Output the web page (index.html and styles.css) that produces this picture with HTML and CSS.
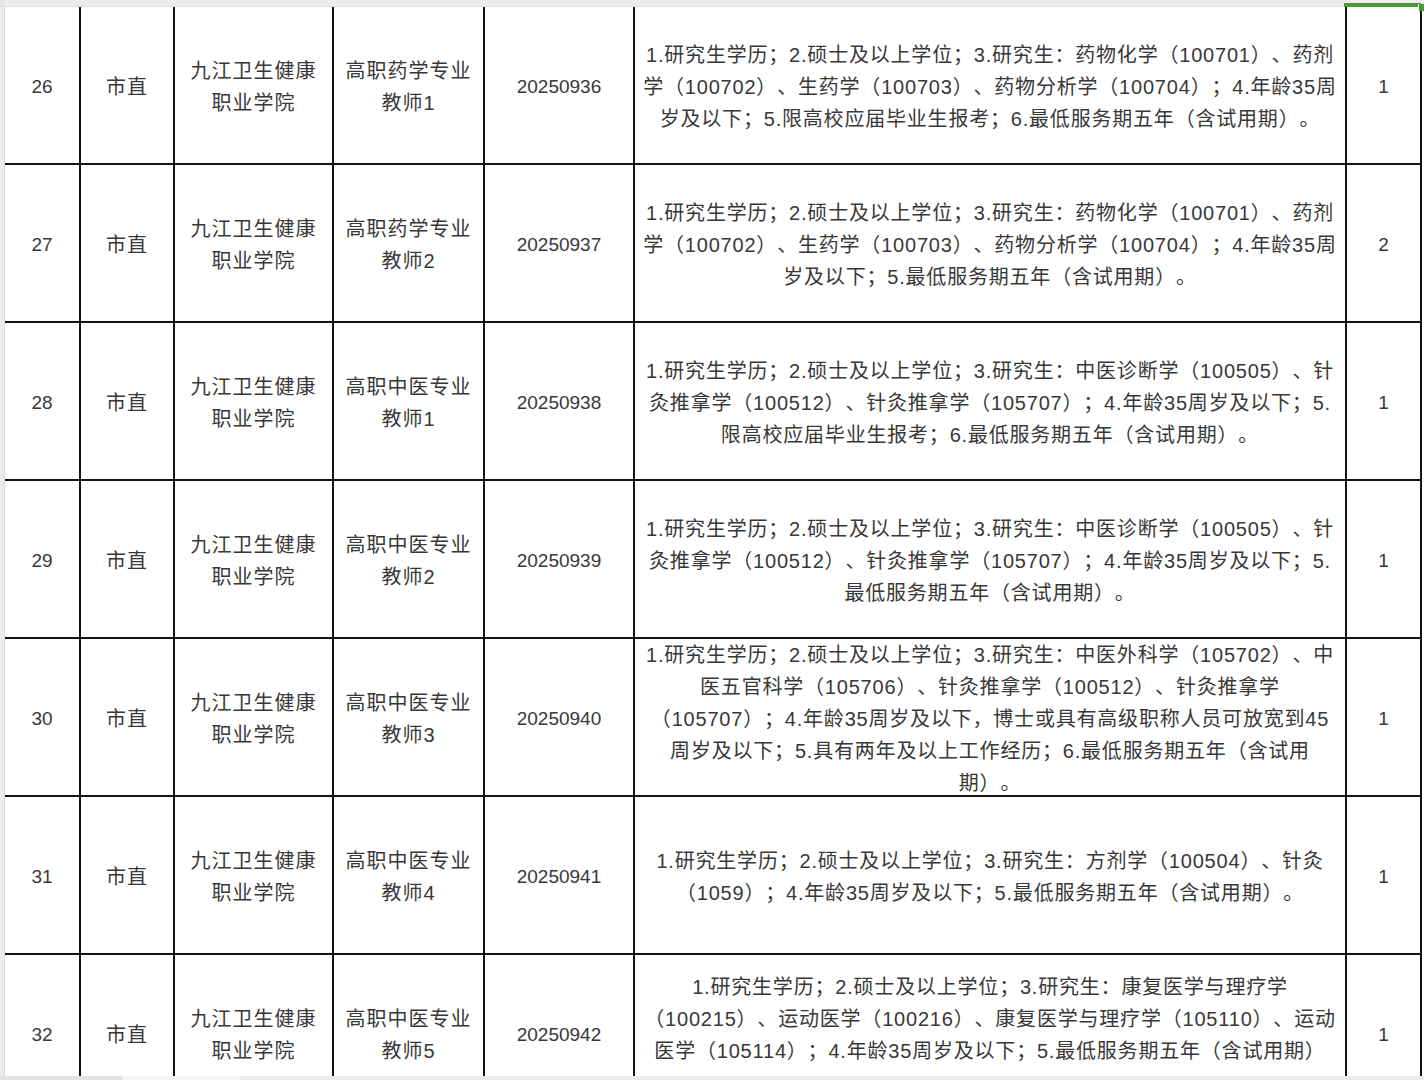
FILE: index.html
```html
<!DOCTYPE html>
<html lang="zh-CN">
<head>
<meta charset="utf-8">
<title>岗位表</title>
<link rel="stylesheet" href="styles.css">
</head>
<body>
<div class="page">
  <div class="topbar">
    <div class="top-corner"></div>
    <div class="top-fill"></div>
  </div>
  <div class="body-area">
    <div class="rowhead"></div>
    <div class="grid">
      <div class="cell num">26</div>
      <div class="cell cjk">市直</div>
      <div class="cell cjk">九江卫生健康<br>职业学院</div>
      <div class="cell cjk">高职药学专业<br>教师1</div>
      <div class="cell code">20250936</div>
      <div class="cell desc">1.研究生学历；2.硕士及以上学位；3.研究生：药物化学（100701）、药剂<br>学（100702）、生药学（100703）、药物分析学（100704）；4.年龄35周<br>岁及以下；5.限高校应届毕业生报考；6.最低服务期五年（含试用期）。</div>
      <div class="cell num">1</div>

      <div class="cell num">27</div>
      <div class="cell cjk">市直</div>
      <div class="cell cjk">九江卫生健康<br>职业学院</div>
      <div class="cell cjk">高职药学专业<br>教师2</div>
      <div class="cell code">20250937</div>
      <div class="cell desc">1.研究生学历；2.硕士及以上学位；3.研究生：药物化学（100701）、药剂<br>学（100702）、生药学（100703）、药物分析学（100704）；4.年龄35周<br>岁及以下；5.最低服务期五年（含试用期）。</div>
      <div class="cell num">2</div>

      <div class="cell num">28</div>
      <div class="cell cjk">市直</div>
      <div class="cell cjk">九江卫生健康<br>职业学院</div>
      <div class="cell cjk">高职中医专业<br>教师1</div>
      <div class="cell code">20250938</div>
      <div class="cell desc">1.研究生学历；2.硕士及以上学位；3.研究生：中医诊断学（100505）、针<br>灸推拿学（100512）、针灸推拿学（105707）；4.年龄35周岁及以下；5.<br>限高校应届毕业生报考；6.最低服务期五年（含试用期）。</div>
      <div class="cell num">1</div>

      <div class="cell num">29</div>
      <div class="cell cjk">市直</div>
      <div class="cell cjk">九江卫生健康<br>职业学院</div>
      <div class="cell cjk">高职中医专业<br>教师2</div>
      <div class="cell code">20250939</div>
      <div class="cell desc">1.研究生学历；2.硕士及以上学位；3.研究生：中医诊断学（100505）、针<br>灸推拿学（100512）、针灸推拿学（105707）；4.年龄35周岁及以下；5.<br>最低服务期五年（含试用期）。</div>
      <div class="cell num">1</div>

      <div class="cell num">30</div>
      <div class="cell cjk">市直</div>
      <div class="cell cjk">九江卫生健康<br>职业学院</div>
      <div class="cell cjk">高职中医专业<br>教师3</div>
      <div class="cell code">20250940</div>
      <div class="cell desc">1.研究生学历；2.硕士及以上学位；3.研究生：中医外科学（105702）、中<br>医五官科学（105706）、针灸推拿学（100512）、针灸推拿学<br>（105707）；4.年龄35周岁及以下，博士或具有高级职称人员可放宽到45<br>周岁及以下；5.具有两年及以上工作经历；6.最低服务期五年（含试用<br>期）。</div>
      <div class="cell num">1</div>

      <div class="cell num">31</div>
      <div class="cell cjk">市直</div>
      <div class="cell cjk">九江卫生健康<br>职业学院</div>
      <div class="cell cjk">高职中医专业<br>教师4</div>
      <div class="cell code">20250941</div>
      <div class="cell desc">1.研究生学历；2.硕士及以上学位；3.研究生：方剂学（100504）、针灸<br>（1059）；4.年龄35周岁及以下；5.最低服务期五年（含试用期）。</div>
      <div class="cell num">1</div>

      <div class="cell num">32</div>
      <div class="cell cjk">市直</div>
      <div class="cell cjk">九江卫生健康<br>职业学院</div>
      <div class="cell cjk">高职中医专业<br>教师5</div>
      <div class="cell code">20250942</div>
      <div class="cell desc">1.研究生学历；2.硕士及以上学位；3.研究生：康复医学与理疗学<br>（100215）、运动医学（100216）、康复医学与理疗学（105110）、运动<br>医学（105114）；4.年龄35周岁及以下；5.最低服务期五年（含试用期）<br>。</div>
      <div class="cell num">1</div>
    </div>
  </div>
  <div class="bottombar">
    <div class="tab-a"></div>
    <div class="tab-b"></div>
    <div class="tab-c"></div>
  </div>
  <div class="selection"></div>
  <div class="sel-handle"></div>
</div>
</body>
</html>
```

FILE: styles.css
```css
html, body {
  margin: 0;
  padding: 0;
  background: #ffffff;
}

body {
  width: 1424px;
  height: 1080px;
  overflow: hidden;
  font-family: "Liberation Sans", "Noto Sans CJK SC", sans-serif;
  color: #383838;
}

.page {
  position: relative;
  width: 1424px;
  height: 1080px;
  display: flex;
  flex-direction: column;
}

.topbar {
  height: 7px;
  flex: 0 0 7px;
  display: flex;
  background: #ececec;
  border-bottom: 1px solid #dedede;
  box-sizing: border-box;
}

.top-corner {
  width: 5px;
  background: #e6e6e6;
}

.top-fill {
  flex: 1;
}

.body-area {
  flex: 1;
  display: flex;
  overflow: hidden;
}

.rowhead {
  width: 5px;
  flex: 0 0 5px;
  background: #ebebeb;
  border-right: 1px solid #d6d6d6;
  box-sizing: border-box;
}

.grid {
  display: grid;
  grid-template-columns: 76px 94px 159px 151px 150px 712px 75px;
  grid-auto-rows: 158px;
  align-content: start;
}

.cell {
  box-sizing: border-box;
  border-right: 2px solid #141414;
  border-bottom: 2px solid #141414;
  padding-top: 4px;
  display: flex;
  align-items: center;
  justify-content: center;
  text-align: center;
  overflow: hidden;
  white-space: nowrap;
  line-height: 32px;
  text-spacing-trim: space-all;
}

.num,
.code {
  font-size: 19px;
  letter-spacing: 0;
}

.cjk {
  font-size: 20px;
  letter-spacing: 1px;
}

.desc {
  font-size: 20px;
  letter-spacing: 0.8px;
}

.bottombar {
  height: 4px;
  flex: 0 0 4px;
  display: flex;
  background: #ebebeb;
}

.tab-a {
  width: 123px;
  background: #e3e3e3;
}

.tab-b {
  width: 117px;
  background: #f6f6f6;
}

.tab-c {
  flex: 1;
  background: #ebebeb;
}

.selection {
  position: absolute;
  top: 3px;
  left: 1344px;
  width: 77px;
  height: 4px;
  background: #4a9a33;
}

.sel-handle {
  position: absolute;
  top: 4px;
  left: 1418px;
  width: 6px;
  height: 7px;
  background: #4a9a33;
  border-left: 1px solid #ffffff;
  box-sizing: border-box;
}
```
